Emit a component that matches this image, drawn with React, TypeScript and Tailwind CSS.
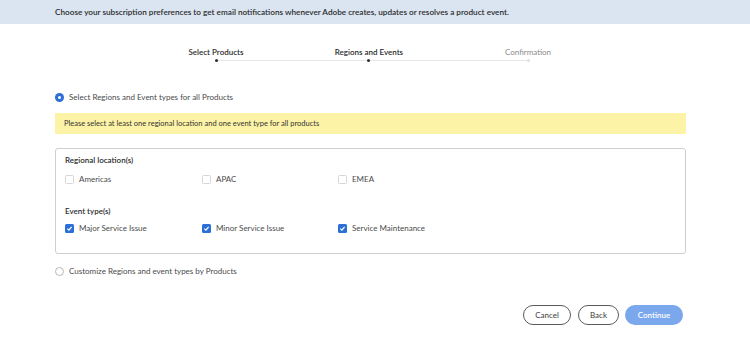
import React from 'react'

const font = { fontFamily: 'Lato, "Open Sans", "Liberation Sans", sans-serif' }

const Check = ({ checked, label }: { checked?: boolean; label: string }) => (
  <label className="flex h-[10px] items-center gap-[5px] text-[8px] leading-[10px] text-[#4b4b4b]">
    {checked ? (
      <span className="flex h-[9px] w-[9px] items-center justify-center rounded-[1.5px] bg-[#2c6fd6]">
        <svg width="7" height="7" viewBox="0 0 10 10">
          <path d="M2 5.2 L4.2 7.3 L8 2.8" fill="none" stroke="#fff" strokeWidth="1.8" />
        </svg>
      </span>
    ) : (
      <span className="h-[9px] w-[9px] rounded-[1.5px] border border-[#d6d6d6] bg-white" />
    )}
    {label}
  </label>
)

const Radio = ({ checked, label }: { checked?: boolean; label: string }) => (
  <div className="flex h-[10px] items-center gap-[5px] text-[8px] leading-[10px] text-[#4b4b4b]">
    {checked ? (
      <span className="flex h-[9px] w-[9px] items-center justify-center rounded-full bg-[#2c6fd6]">
        <span className="h-[3px] w-[3px] rounded-full bg-white" />
      </span>
    ) : (
      <span className="h-[9px] w-[9px] rounded-full border border-[#b9b9b9] bg-white" />
    )}
    {label}
  </div>
)

const steps = [
  { name: 'Select Products', done: true, left: '0%' },
  { name: 'Regions and Events', done: true, left: '49%' },
  { name: 'Confirmation', done: false, left: '100%' },
]

export default function App() {
  return (
    <div className="h-[342px] w-[750px] bg-white" style={font}>
      <div className="flex h-[24px] items-center bg-[#dbe5f1] pl-[55px] text-[8.2px] font-semibold text-[#2c2c2c]">
        Choose your subscription preferences to get email notifications whenever Adobe creates, updates or
        resolves a product event.
      </div>

      {/* stepper */}
      <div className="relative ml-[216px] mt-[23px] h-[20px] w-[312px]">
        <div className="absolute left-0 right-0 top-[13px] h-px bg-[#e6e6e6]" />
        {steps.map((s) => (
          <div
            key={s.name}
            className="absolute top-0 flex w-[120px] -translate-x-1/2 flex-col items-center"
            style={{ left: s.left }}
          >
            <span
              className={`whitespace-nowrap text-[8px] leading-[10px] ${
                s.done ? 'font-semibold text-[#2c2c2c]' : 'text-[#8a8a8a]'
              }`}
            >
              {s.name}
            </span>
            <span
              className={`mt-[2px] h-[3px] w-[3px] rounded-full ${s.done ? 'bg-[#2c2c2c]' : 'bg-[#e0e0e0]'}`}
            />
          </div>
        ))}
      </div>

      <div className="pl-[55px] pr-[64px] pt-[25px]">
        <Radio checked label="Select Regions and Event types for all Products" />
        <div className="mt-[11px] flex h-[21px] items-center bg-[#fdf3a6] pl-[9px] text-[7.5px] text-[#333333]">
          Please select at least one regional location and one event type for all products
        </div>

        <div className="mt-[14px] h-[106px] rounded-[3px] border border-[#cfcfcf] px-[9px] pt-[6px]">
          <div className="text-[8px] font-semibold leading-[10px] text-[#2c2c2c]">Regional location(s)</div>
          <div className="mt-[9px] grid grid-cols-[137px_136px_1fr]">
            <Check label="Americas" />
            <Check label="APAC" />
            <Check label="EMEA" />
          </div>
          <div className="mt-[22px] text-[8px] font-semibold leading-[10px] text-[#2c2c2c]">Event type(s)</div>
          <div className="mt-[7px] grid grid-cols-[137px_136px_1fr]">
            <Check checked label="Major Service Issue" />
            <Check checked label="Minor Service Issue" />
            <Check checked label="Service Maintenance" />
          </div>
        </div>

        <div className="mt-[12px]">
          <Radio label="Customize Regions and event types by Products" />
        </div>

        <div className="mt-[29px] flex justify-end pr-[3px]">
          <button className="h-[20px] w-[48px] rounded-full border border-[#5a5a5a] text-[8px] text-[#3a3a3a]">
            Cancel
          </button>
          <button className="ml-[7px] h-[20px] w-[41px] rounded-full border border-[#5a5a5a] text-[8px] text-[#3a3a3a]">
            Back
          </button>
          <button className="ml-[6px] h-[20px] w-[58px] rounded-full bg-[#7ba7ec] text-[8px] font-semibold text-white">
            Continue
          </button>
        </div>
      </div>
    </div>
  )
}
